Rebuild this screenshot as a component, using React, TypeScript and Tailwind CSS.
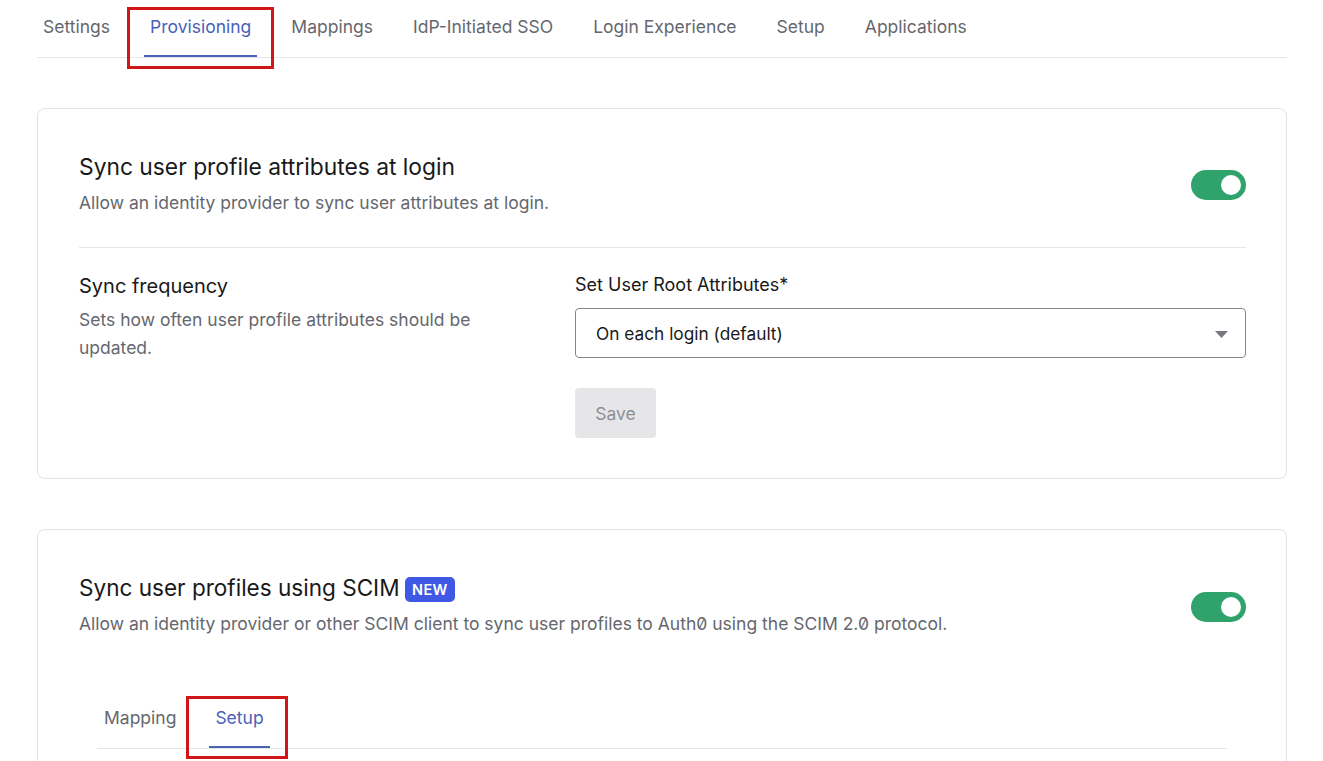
const TOP_TABS = ['Settings', 'Provisioning', 'Mappings', 'IdP-Initiated SSO', 'Login Experience', 'Setup', 'Applications']

function Toggle() {
  return (
    <div className="flex h-[30px] w-[55px] shrink-0 items-center justify-end rounded-full bg-[#2fa36b] pr-[5px]">
      <div className="h-5 w-5 rounded-full bg-white" />
    </div>
  )
}

function Tab({ label, active, box }: { label: string; active?: boolean; box?: string }) {
  return (
    <div className={`relative flex h-full items-center px-[6px] pb-[2px] ${active ? 'text-[#4a61b8]' : 'text-[#65676e]'}`}>
      {label}
      {active && <div className="absolute bottom-0 left-0 right-0 h-[2px] bg-[#4a61b8]" />}
      {box && <div className={`absolute border-[3px] border-[#d01616] ${box}`} />}
    </div>
  )
}

export default function App() {
  return (
    <div className="h-[761px] overflow-hidden bg-white pl-[37px] pr-[36px] font-['Inter',sans-serif]">
      <div className="flex h-[58px] gap-[28px] border-b border-[#e6e6e8] text-[17.5px]">
        {TOP_TABS.map((tab) => (
          <Tab
            key={tab}
            label={tab}
            active={tab === 'Provisioning'}
            box={tab === 'Provisioning' ? 'top-[7px] -bottom-[12px] -left-[17px] -right-[17px]' : undefined}
          />
        ))}
      </div>

      <section className="mt-[50px] h-[371px] rounded-lg border border-[#e3e3e6] pl-[41px] pr-[40px] pt-[40px]">
        <div className="flex h-[99px] items-start justify-between border-b border-[#e6e6e8]">
          <div>
            <h2 className="text-[22.8px] leading-[36px] text-[#191919]">Sync user profile attributes at login</h2>
            <p className="text-[17.5px] leading-[36px] text-[#65676e]">Allow an identity provider to sync user attributes at login.</p>
          </div>
          <div className="mt-[21px]">
            <Toggle />
          </div>
        </div>

        <div className="flex pt-[24px]">
          <div className="w-[496px] shrink-0">
            <h3 className="text-[20px] leading-[28px] text-[#191919]">Sync frequency</h3>
            <p className="mt-[6px] w-[420px] text-[17.5px] leading-[28px] text-[#65676e]">
              Sets how often user profile attributes should be updated.
            </p>
          </div>
          <div className="flex-1">
            <label className="block -translate-y-px text-[18px] leading-[28px] text-[#191919]">Set User Root Attributes*</label>
            <div className="mt-[8px] flex h-[50px] items-center justify-between rounded border border-[#85868c] pl-[20px] pr-[17px] pt-[2px] text-[17.3px] text-[#191919]">
              On each login (default)
              <svg width="13" height="7" viewBox="0 0 13 7">
                <path d="M0 0h13L6.5 7z" fill="#77787e" />
              </svg>
            </div>
            <button className="mt-[30px] h-[50px] w-[81px] rounded bg-[#e6e6e8] pt-[2px] text-[17.5px] text-[#8e8f94]">Save</button>
          </div>
        </div>
      </section>

      <section className="mt-[50px] h-[300px] rounded-lg border border-[#e3e3e6] pl-[41px] pr-[40px] pt-[40px]">
        <div className="flex items-start justify-between">
          <div>
            <h2 className="flex items-center text-[22.55px] leading-[36px] text-[#191919]">
              Sync user profiles using SCIM
              <span className="ml-[5px] mt-[2px] rounded-[5px] bg-[#3f59e4] px-[7.5px] py-[4px] text-[14.5px] font-semibold leading-[17px] tracking-wide text-white">NEW</span>
            </h2>
            <p className="text-[17.5px] leading-[36px] text-[#65676e] slashed-zero">
              Allow an identity provider or other SCIM client to sync user profiles to Auth0 using the SCIM 2.0 protocol.
            </p>
          </div>
          <div className="mt-[22px]">
            <Toggle />
          </div>
        </div>

        <div className="ml-[18px] mr-[19px] mt-[49px] flex h-[58px] gap-[27px] border-b border-[#e6e6e8] pl-px text-[17.5px]">
          <Tab label="Mapping" />
          <Tab label="Setup" active box="top-[5px] -bottom-[11px] -left-[23px] -right-[18px]" />
        </div>
      </section>
    </div>
  )
}
